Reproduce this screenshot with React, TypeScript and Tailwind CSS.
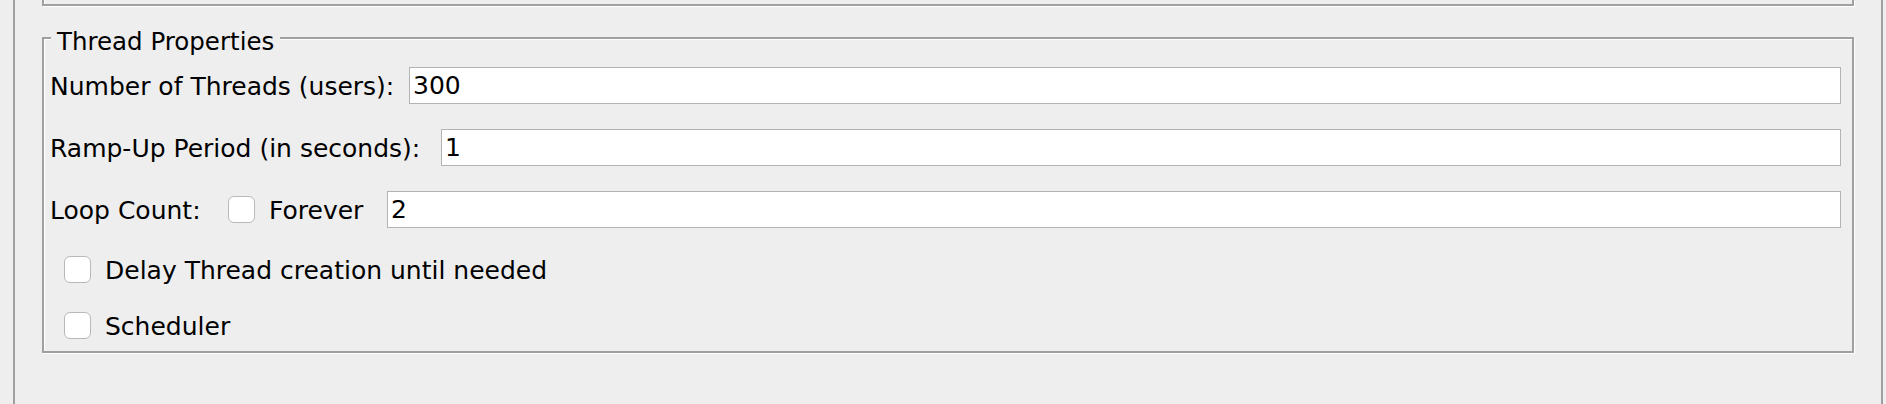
import React from "react";

function Checkbox() {
  return <span className="inline-block w-[27px] h-[27px] shrink-0 rounded-[6px] border border-[#b9b9b9] bg-white" />;
}

function TextField({ value }: { value: string }) {
  return (
    <input
      type="text"
      defaultValue={value}
      className="flex-1 min-w-0 h-[37px] bg-white border border-[#b3b3b3] px-[3px] text-[25px] text-black outline-none"
    />
  );
}

export default function App() {
  return (
    <div className="w-[1886px] h-[404px] bg-[#eeeeee] overflow-hidden font-['DejaVu_Sans',sans-serif] text-[25px] text-black">
      <div className="ml-[13px] w-[1870px] h-full border-x-2 border-[#a0a0a0] px-[27px]">
        {/* panel above, only its bottom edge shows */}
        <div className="h-[6px] border-x-2 border-b-2 border-[#a0a0a0] shadow-[1px_1px_0_#ffffff,inset_1px_0_0_#ffffff]" />

        <div className="relative mt-[31px] h-[316px] border-2 border-[#a0a0a0] shadow-[inset_1px_1px_0_#ffffff,1px_1px_0_#ffffff] pl-[6px] pr-[11px] flex flex-col">
          <span className="absolute left-[7px] -top-[12px] px-[6px] bg-[#eeeeee] leading-[29px] text-[24.5px]">Thread Properties</span>

          <div className="mt-[28px] h-[37px] flex items-center">
            <span className="w-[359px] shrink-0 pt-[2px] whitespace-nowrap">Number of Threads (users):</span>
            <TextField value="300" />
          </div>

          <div className="mt-[25px] h-[37px] flex items-center">
            <span className="w-[391px] shrink-0 pt-[2px] whitespace-nowrap">Ramp-Up Period (in seconds):</span>
            <TextField value="1" />
          </div>

          <div className="mt-[25px] h-[37px] flex items-center">
            <span className="w-[178px] shrink-0 pt-[2px]">Loop Count:</span>
            <Checkbox />
            <span className="ml-[14px] w-[118px] shrink-0 pt-[2px]">Forever</span>
            <TextField value="2" />
          </div>

          <div className="mt-[23px] h-[37px] flex items-center pl-[14px]">
            <Checkbox />
            <span className="ml-[14px] pt-[2px]">Delay Thread creation until needed</span>
          </div>

          <div className="mt-[19px] h-[37px] flex items-center pl-[14px]">
            <Checkbox />
            <span className="ml-[14px] pt-[2px]">Scheduler</span>
          </div>
        </div>
      </div>
    </div>
  );
}
